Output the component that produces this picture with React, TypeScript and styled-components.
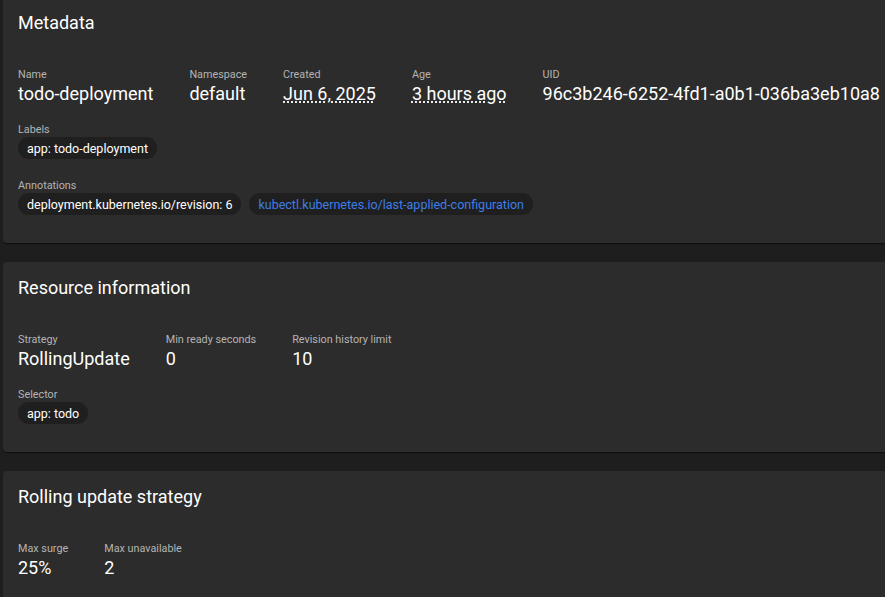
import React from "react";
import styled, { createGlobalStyle } from "styled-components";

const Global = createGlobalStyle`
  html, body {
    margin: 0;
    padding: 0;
    background: #1e1e1e;
    overflow: hidden;
  }
  body {
    font-family: Roboto, "Liberation Sans", sans-serif;
    color: #ffffff;
  }
`;

const Page = styled.div`
  display: flex;
  flex-direction: column;
  gap: 19px;
  margin-top: -3px;
  padding-left: 3px;
  margin-right: -20px;
`;

const Card = styled.section`
  background: #2c2c2c;
  border-radius: 4px;
  box-shadow: 0 2px 1px -1px rgba(0, 0, 0, 0.35), 0 1px 1px 0 rgba(0, 0, 0, 0.25);
  padding: 14px 15px 25px;
`;

const Title = styled.h2`
  margin: 0;
  font-size: 18px;
  font-weight: 400;
  line-height: 24px;
  color: #ffffff;
`;

const Body = styled.div`
  margin-top: 33px;
  display: flex;
  flex-direction: column;
  gap: 17px;
`;

const Row = styled.div`
  display: flex;
  gap: 36px;
  align-items: flex-start;
`;

const Field = styled.div`
  display: flex;
  flex-direction: column;
`;

const Label = styled.div`
  font-size: 10.8px;
  line-height: 14px;
  color: #b4b4b4;
`;

const Value = styled.div<{ $dotted?: boolean }>`
  font-size: 18px;
  line-height: 24px;
  color: #ffffff;
  white-space: nowrap;
  text-decoration: ${(p) => (p.$dotted ? "underline dotted" : "none")};
  text-underline-offset: 2px;
`;

const Chips = styled.div`
  display: flex;
  gap: 8px;
  margin-bottom: 3px;
`;

const Chip = styled.span<{ $link?: boolean }>`
  display: inline-flex;
  align-items: center;
  height: 22px;
  padding: 0 9px;
  border-radius: 11px;
  background: #1f1f1f;
  font-size: 12.5px;
  color: ${(p) => (p.$link ? "#3d7ee8" : "#ffffff")};
  white-space: nowrap;
`;

export default function App() {
  return (
    <>
      <Global />
      <Page>
        <Card>
          <Title>Metadata</Title>
          <Body>
            <Row>
              <Field>
                <Label>Name</Label>
                <Value>todo-deployment</Value>
              </Field>
              <Field>
                <Label>Namespace</Label>
                <Value>default</Value>
              </Field>
              <Field>
                <Label>Created</Label>
                <Value $dotted>Jun 6, 2025</Value>
              </Field>
              <Field>
                <Label>Age</Label>
                <Value $dotted>3 hours ago</Value>
              </Field>
              <Field>
                <Label>UID</Label>
                <Value>96c3b246-6252-4fd1-a0b1-036ba3eb10a8</Value>
              </Field>
            </Row>
            <Field>
              <Label>Labels</Label>
              <Chips>
                <Chip>app: todo-deployment</Chip>
              </Chips>
            </Field>
            <Field>
              <Label>Annotations</Label>
              <Chips>
                <Chip>deployment.kubernetes.io/revision: 6</Chip>
                <Chip $link>kubectl.kubernetes.io/last-applied-configuration</Chip>
              </Chips>
            </Field>
          </Body>
        </Card>
        <Card>
          <Title>Resource information</Title>
          <Body>
            <Row>
              <Field>
                <Label>Strategy</Label>
                <Value>RollingUpdate</Value>
              </Field>
              <Field>
                <Label>Min ready seconds</Label>
                <Value>0</Value>
              </Field>
              <Field>
                <Label>Revision history limit</Label>
                <Value>10</Value>
              </Field>
            </Row>
            <Field>
              <Label>Selector</Label>
              <Chips>
                <Chip>app: todo</Chip>
              </Chips>
            </Field>
          </Body>
        </Card>
        <Card>
          <Title>Rolling update strategy</Title>
          <Body>
            <Row>
              <Field>
                <Label>Max surge</Label>
                <Value>25%</Value>
              </Field>
              <Field>
                <Label>Max unavailable</Label>
                <Value>2</Value>
              </Field>
            </Row>
          </Body>
        </Card>
      </Page>
    </>
  );
}
